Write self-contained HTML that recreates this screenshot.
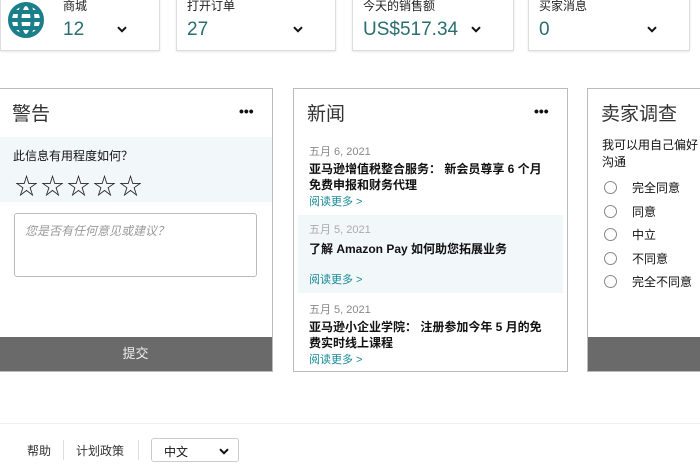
<!DOCTYPE html>
<html><head><meta charset="utf-8"><style>
*{box-sizing:border-box;margin:0;padding:0}
body{width:700px;height:470px;overflow:hidden;background:#fff;font-family:"Liberation Sans","Noto Sans CJK SC",sans-serif;color:#111;position:relative}
.a{position:absolute}
.card{position:absolute;top:-6px;height:57px;border:1px solid #ddd;background:#fff;box-shadow:0 1px 2px #e6e6e6}
.card .l{position:absolute;top:2px;left:44px;font-size:12px;color:#222}
.card .v{position:absolute;top:24px;left:44px;font-size:19px;color:#2a6e70}
.card .c{position:absolute;top:31px;right:32px}
.panel{position:absolute;top:88px;height:284px;border:1px solid #bbb;background:#fff}
.ttl{position:absolute;top:10px;left:13px;font-size:19px;color:#333}
.dots{position:absolute;top:14px;font-size:14px;font-weight:bold;letter-spacing:0}
.btn{position:absolute;left:0;right:0;bottom:0;height:34px;background:#6a6a6a;color:#eee;font-size:13px;text-align:center;line-height:34px}
.dt{font-size:11px;color:#888}
.hl{font-size:12px;font-weight:bold;line-height:16px}
.rm{font-size:11px;color:#1a8a9a}
.rd{position:absolute;left:16px;width:13px;height:13px;border:1px solid #888;border-radius:50%}
.rl{position:absolute;left:44px;font-size:12px}
</style></head><body>
<svg width="0" height="0" style="position:absolute"><defs><symbol id="ch" viewBox="0 0 10 7"><path d="M1 1.2L5 5.2L9 1.2" fill="none" stroke="#111" stroke-width="2"/></symbol></defs></svg>
<div class="card" style="left:0;width:160px"><svg class="a" style="left:7px;top:5px" width="36" height="40" viewBox="0 0 36 40"><g fill="none" stroke="#1a7f8a" stroke-width="4"><circle cx="18" cy="20" r="16"/><ellipse cx="18" cy="20" rx="6.5" ry="16"/><line x1="2" y1="20" x2="34" y2="20"/><line x1="4" y1="12" x2="32" y2="12"/><line x1="4" y1="28" x2="32" y2="28"/></g></svg><div class="l" style="left:62px">商城</div><div class="v" style="left:62px">12</div><svg class="c" width="10" height="7"><use href="#ch"/></svg></div>
<div class="card" style="left:176px;width:160px"><div class="l" style="left:10px">打开订单</div><div class="v" style="left:10px">27</div><svg class="c" width="10" height="7"><use href="#ch"/></svg></div>
<div class="card" style="left:352px;width:162px"><div class="l" style="left:10px">今天的销售额</div><div class="v" style="left:10px">US$517.34</div><svg class="c" width="10" height="7"><use href="#ch"/></svg></div>
<div class="card" style="left:528px;width:162px"><div class="l" style="left:10px">买家消息</div><div class="v" style="left:10px">0</div><svg class="c" width="10" height="7"><use href="#ch"/></svg></div>

<div class="panel" style="left:-2px;width:275px">
<div class="ttl">警告</div><div class="dots" style="left:240px">•••</div>
<div class="a" style="left:0;right:0;top:48px;height:65px;background:#f2f7fa"></div>
<div class="a" style="left:14px;top:58px;font-size:12px">此信息有用程度如何？</div>
<div class="a" style="left:16px;top:78px;font-size:23px;letter-spacing:3px;color:#222">☆☆☆☆☆</div>
<div class="a" style="left:15px;top:124px;width:243px;height:64px;border:1px solid #bbb;border-radius:3px;padding:8px 10px;font-size:12px;font-style:italic;color:#999">您是否有任何意见或建议？</div>
<div class="btn">提交</div>
</div>

<div class="panel" style="left:293px;width:275px">
<div class="ttl">新闻</div><div class="dots" style="left:240px">•••</div>
<div class="a" style="left:4px;right:4px;top:126px;height:78px;background:#f2f7fa"></div>
<div class="a" style="left:15px;top:54px;width:240px"><div class="dt">五月 6, 2021</div><div class="hl" style="margin-top:2px">亚马逊增值税整合服务： 新会员尊享 6 个月免费申报和财务代理</div><div class="rm">阅读更多 &gt;</div></div>
<div class="a" style="left:15px;top:132px;width:240px"><div class="dt" style="color:#aaa">五月 5, 2021</div><div class="hl" style="margin-top:4px">了解 Amazon Pay 如何助您拓展业务</div><div class="rm" style="margin-top:14px">阅读更多 &gt;</div></div>
<div class="a" style="left:15px;top:212px;width:240px"><div class="dt">五月 5, 2021</div><div class="hl" style="margin-top:2px">亚马逊小企业学院： 注册参加今年 5 月的免费实时线上课程</div><div class="rm">阅读更多 &gt;</div></div>
</div>

<div class="panel" style="left:587px;width:130px;overflow:hidden">
<div class="ttl">卖家调查</div>
<div class="a" style="left:14px;top:48px;font-size:12px;line-height:17px;white-space:nowrap">我可以用自己偏好<br>沟通</div>
<div class="rd" style="top:92px"></div><div class="rl" style="top:90px">完全同意</div>
<div class="rd" style="top:116px"></div><div class="rl" style="top:114px">同意</div>
<div class="rd" style="top:139px"></div><div class="rl" style="top:137px">中立</div>
<div class="rd" style="top:163px"></div><div class="rl" style="top:161px">不同意</div>
<div class="rd" style="top:186px"></div><div class="rl" style="top:184px">完全不同意</div>
<div class="btn"></div>
</div>

<div class="a" style="left:0;right:0;top:423px;border-top:1px solid #eee"></div>
<div class="a" style="left:27px;top:442px;font-size:12px;color:#333">帮助</div>
<div class="a" style="left:63px;top:440px;height:20px;border-left:1px solid #ddd"></div>
<div class="a" style="left:76px;top:442px;font-size:12px;color:#333">计划政策</div>
<div class="a" style="left:138px;top:440px;height:20px;border-left:1px solid #ddd"></div>
<div class="a" style="left:151px;top:438px;width:88px;height:24px;border:1px solid #ccc;border-radius:3px;font-size:12px;padding:4px 12px">中文<svg style="position:absolute;right:9px;top:9px" width="10" height="7"><use href="#ch"/></svg></div>
</body></html>
